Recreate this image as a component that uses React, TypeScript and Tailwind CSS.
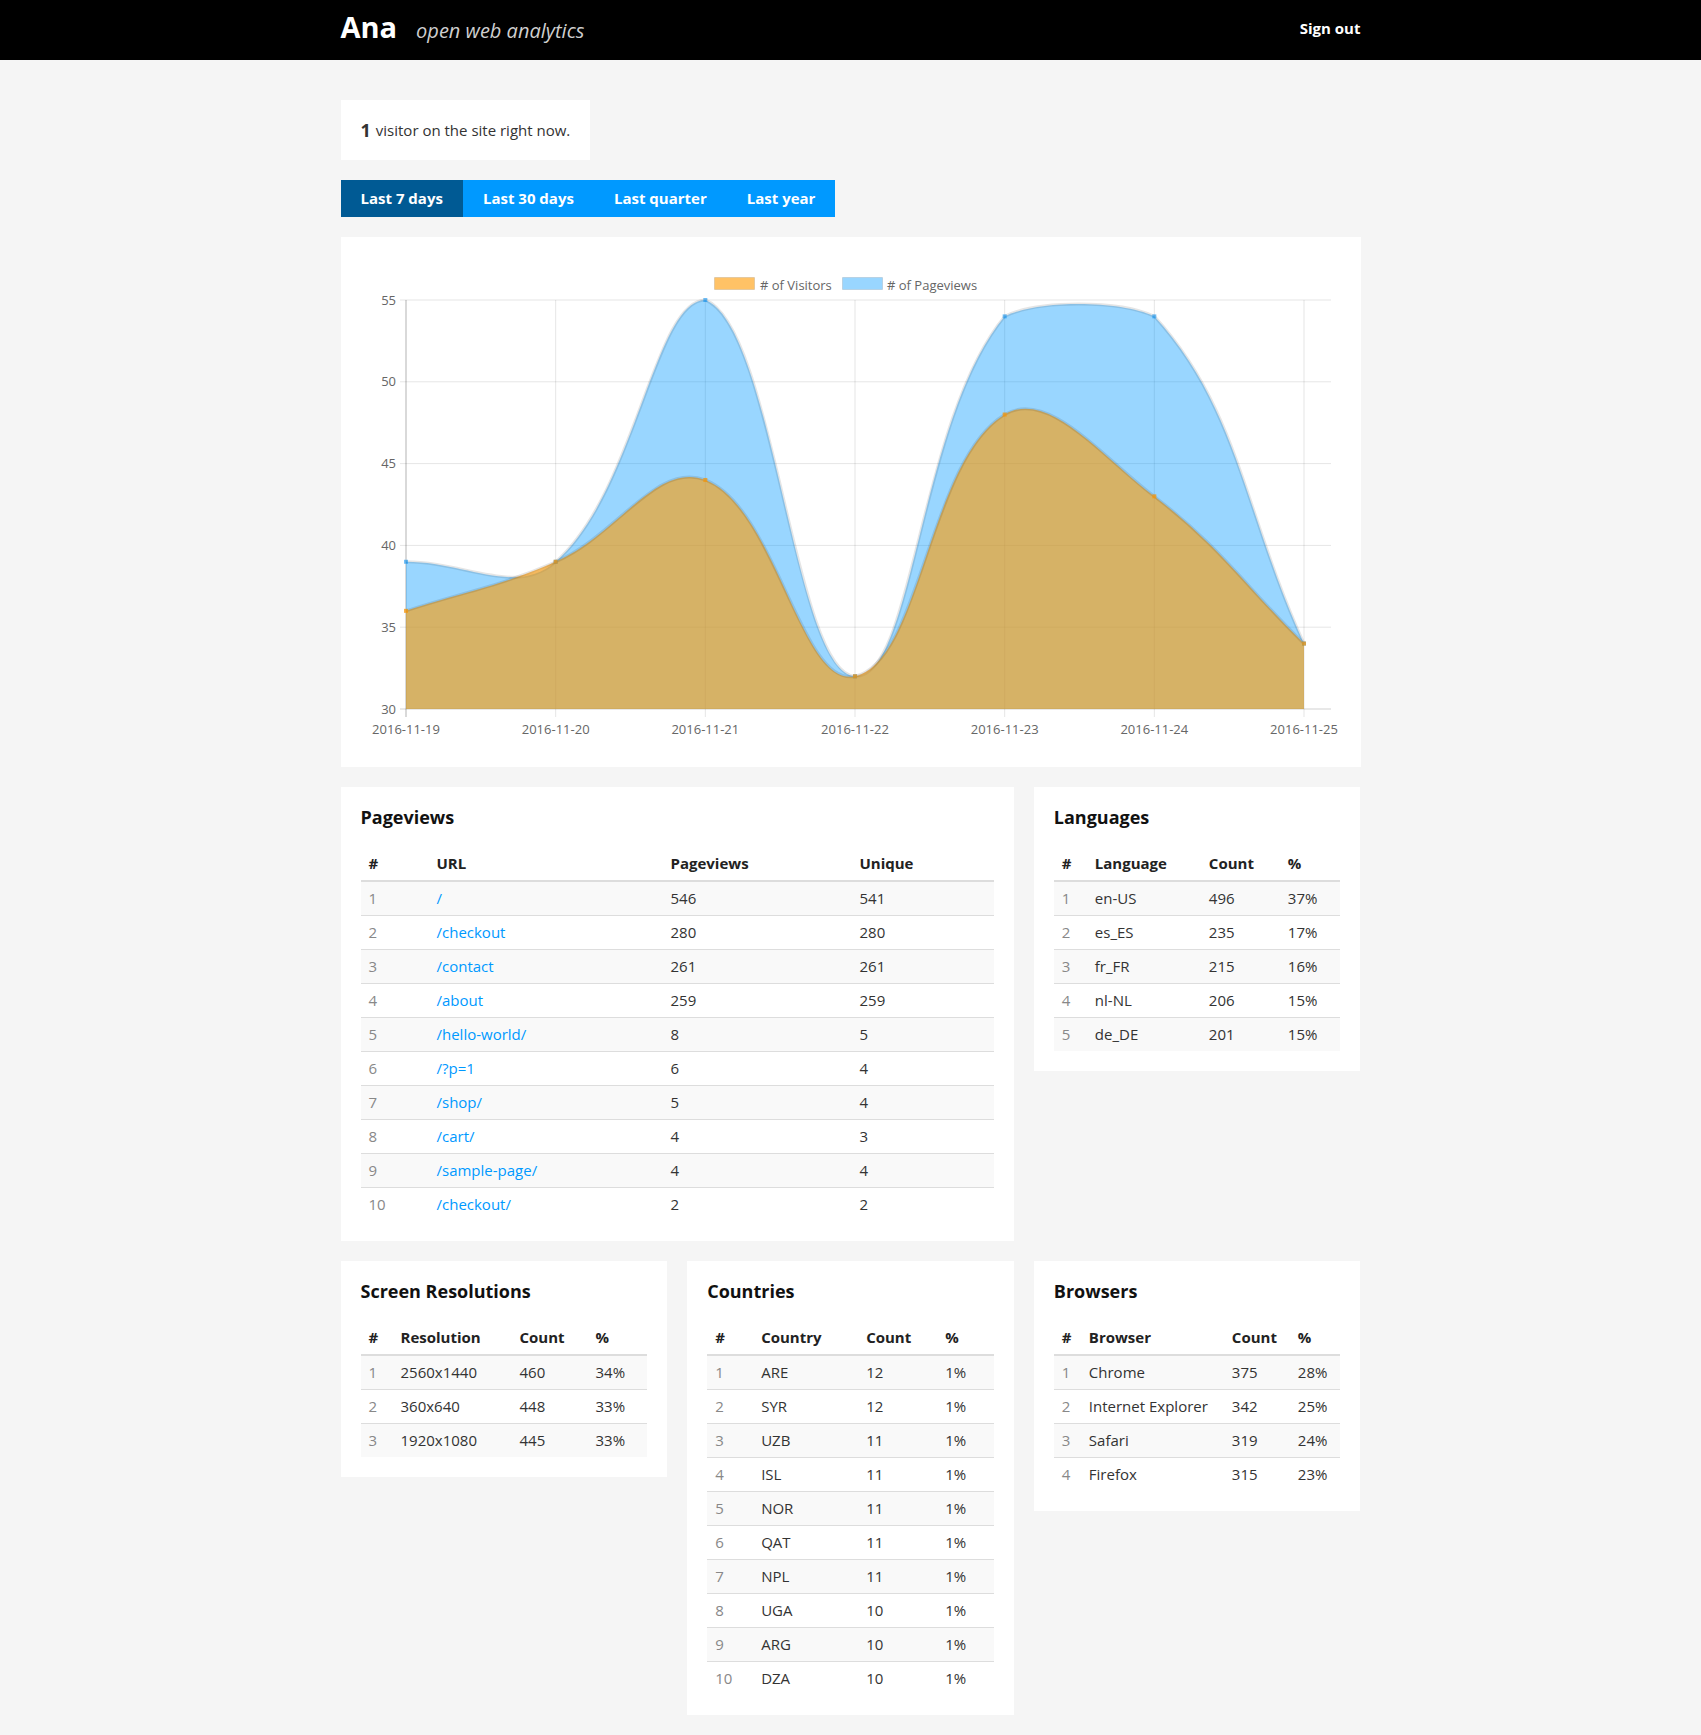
import React from "react";

type Row = (string | number)[];

const pageviews: Row[] = [
  [1, "/", 546, 541],
  [2, "/checkout", 280, 280],
  [3, "/contact", 261, 261],
  [4, "/about", 259, 259],
  [5, "/hello-world/", 8, 5],
  [6, "/?p=1", 6, 4],
  [7, "/shop/", 5, 4],
  [8, "/cart/", 4, 3],
  [9, "/sample-page/", 4, 4],
  [10, "/checkout/", 2, 2],
];

const languages: Row[] = [
  [1, "en-US", 496, "37%"],
  [2, "es_ES", 235, "17%"],
  [3, "fr_FR", 215, "16%"],
  [4, "nl-NL", 206, "15%"],
  [5, "de_DE", 201, "15%"],
];

const resolutions: Row[] = [
  [1, "2560x1440", 460, "34%"],
  [2, "360x640", 448, "33%"],
  [3, "1920x1080", 445, "33%"],
];

const countries: Row[] = [
  [1, "ARE", 12, "1%"],
  [2, "SYR", 12, "1%"],
  [3, "UZB", 11, "1%"],
  [4, "ISL", 11, "1%"],
  [5, "NOR", 11, "1%"],
  [6, "QAT", 11, "1%"],
  [7, "NPL", 11, "1%"],
  [8, "UGA", 10, "1%"],
  [9, "ARG", 10, "1%"],
  [10, "DZA", 10, "1%"],
];

const browsers: Row[] = [
  [1, "Chrome", 375, "28%"],
  [2, "Internet Explorer", 342, "25%"],
  [3, "Safari", 319, "24%"],
  [4, "Firefox", 315, "23%"],
];

const labels = [
  "2016-11-19",
  "2016-11-20",
  "2016-11-21",
  "2016-11-22",
  "2016-11-23",
  "2016-11-24",
  "2016-11-25",
];
const visitors = [36, 39, 44, 32, 48, 43, 34];
const views = [39, 39, 55, 32, 54, 54, 34];

const X0 = 65;
const X1 = 963;
const YT = 63;
const YB = 472;
const xs = (i: number) => X0 + (i * (X1 - X0)) / 6;
const yv = (v: number) => YT + (55 - v) * ((YB - YT) / 25);

function buildPath(vals: number[]) {
  const pts = vals.map((v, i) => ({ x: xs(i), y: yv(v) }));
  const t = 0.4;
  const clampY = (y: number) => Math.max(YT, Math.min(YB, y));
  const clampX = (x: number) => Math.max(X0, Math.min(X1, x));
  const cps = pts.map((p, i) => {
    const p0 = pts[i - 1] || p;
    const p2 = pts[i + 1] || p;
    const d01 = Math.hypot(p.x - p0.x, p.y - p0.y);
    const d12 = Math.hypot(p2.x - p.x, p2.y - p.y);
    let s01 = d01 / (d01 + d12);
    let s12 = d12 / (d01 + d12);
    if (isNaN(s01)) s01 = 0;
    if (isNaN(s12)) s12 = 0;
    const fa = t * s01;
    const fb = t * s12;
    return {
      prev: { x: clampX(p.x - fa * (p2.x - p0.x)), y: clampY(p.y - fa * (p2.y - p0.y)) },
      next: { x: clampX(p.x + fb * (p2.x - p0.x)), y: clampY(p.y + fb * (p2.y - p0.y)) },
    };
  });
  let d = `M${pts[0].x},${pts[0].y}`;
  for (let i = 1; i < pts.length; i++) {
    d += ` C${cps[i - 1].next.x},${cps[i - 1].next.y} ${cps[i].prev.x},${cps[i].prev.y} ${pts[i].x},${pts[i].y}`;
  }
  const fill = `${d} L${pts[pts.length - 1].x},${YB} L${pts[0].x},${YB} Z`;
  return { line: d, fill, pts };
}

function Chart() {
  const blue = buildPath(views);
  const orange = buildPath(visitors);
  const ticks = [55, 50, 45, 40, 35, 30];
  return (
    <svg width="1020" height="530" viewBox="0 0 1020 530" className="block">
      {ticks.map((v) => (
        <g key={v}>
          <line
            x1={59}
            x2={990}
            y1={yv(v)}
            y2={yv(v)}
            stroke={v === 30 ? "rgba(0,0,0,0.18)" : "rgba(0,0,0,0.1)"}
            strokeWidth={1}
          />
          <text
            x={55}
            y={yv(v) + 4.5}
            textAnchor="end"
            fontFamily="'Open Sans', sans-serif"
            fontSize={13}
            fill="#666"
          >
            {v}
          </text>
        </g>
      ))}
      {labels.map((l, i) => (
        <g key={l}>
          <line
            x1={xs(i)}
            x2={xs(i)}
            y1={YT}
            y2={YB + 8}
            stroke={i === 0 ? "rgba(0,0,0,0.3)" : "rgba(0,0,0,0.1)"}
            strokeWidth={1}
          />
          <text
            x={xs(i)}
            y={497}
            textAnchor="middle"
            fontFamily="'Open Sans', sans-serif"
            fontSize={13}
            fill="#666"
          >
            {l}
          </text>
        </g>
      ))}
      <path d={blue.fill} fill="rgba(0,153,255,0.4)" />
      <path d={blue.line} fill="none" stroke="rgba(0,0,0,0.1)" strokeWidth={3} />
      <path d={orange.fill} fill="rgba(255,153,0,0.6)" />
      <path d={orange.line} fill="none" stroke="rgba(0,0,0,0.1)" strokeWidth={3} />
      {blue.pts.map((p, i) => (
        <rect key={`b${i}`} x={p.x - 2} y={p.y - 2} width={4} height={4} fill="rgba(0,140,240,0.55)" />
      ))}
      {orange.pts.map((p, i) => (
        <rect key={`o${i}`} x={p.x - 2} y={p.y - 2} width={4} height={4} fill="rgba(245,150,10,0.75)" />
      ))}
      <rect x={373.5} y={40.5} width={40} height={12} fill="rgba(255,153,0,0.6)" stroke="rgba(0,0,0,0.1)" />
      <text x={419} y={53} fontFamily="'Open Sans', sans-serif" fontSize={13} fill="#666">
        # of Visitors
      </text>
      <rect x={501.5} y={40.5} width={40} height={12} fill="rgba(0,153,255,0.4)" stroke="rgba(0,0,0,0.1)" />
      <text x={546} y={53} fontFamily="'Open Sans', sans-serif" fontSize={13} fill="#666">
        # of Pageviews
      </text>
    </svg>
  );
}

function DataTable({
  title,
  headers,
  widths,
  rows,
  linkCol,
}: {
  title: string;
  headers: string[];
  widths: string[];
  rows: Row[];
  linkCol?: boolean;
}) {
  return (
    <div className="bg-white px-5 pt-5 pb-5">
      <h2 className="text-[18px] leading-[20px] h-[20px] font-bold text-[#111]">{title}</h2>
      <table className="mt-5 w-full table-fixed border-separate border-spacing-0 text-[15px]">
        <thead>
          <tr>
            {headers.map((h, i) => (
              <th
                key={h}
                className={`${widths[i] || ""} text-left font-bold text-[#222] px-2 py-[6px] leading-[21px] border-b-2 border-[#ddd]`}
              >
                {h}
              </th>
            ))}
          </tr>
        </thead>
        <tbody>
          {rows.map((r, ri) => (
            <tr key={ri} className={ri % 2 === 0 ? "bg-[#f9f9f9]" : "bg-white"}>
              {r.map((c, ci) => (
                <td
                  key={ci}
                  className={`px-2 py-[6px] leading-[21px] whitespace-nowrap ${
                    ri > 0 ? "border-t border-[#ddd]" : ""
                  } ${ci === 0 ? "text-[#888]" : "text-[#333]"}`}
                >
                  {linkCol && ci === 1 ? <a className="text-[#0099ff]">{c}</a> : c}
                </td>
              ))}
            </tr>
          ))}
        </tbody>
      </table>
    </div>
  );
}

export default function App() {
  return (
    <div className="min-h-screen bg-[#f5f5f5] font-['Open_Sans',sans-serif] text-[#333] pb-5">
      <header className="bg-black h-[60px]">
        <div className="w-[1020px] mx-auto h-full flex items-center justify-between">
          <div className="flex items-baseline mb-[8px]">
            <span className="text-[29px] leading-none font-bold text-white">Ana</span>
            <span className="ml-[19px] text-[20px] leading-none italic text-[#cfcfcf]">open web analytics</span>
          </div>
          <span className="text-[15px] leading-5 font-bold text-white mb-[5px]">Sign out</span>
        </div>
      </header>
      <main className="w-[1020px] mx-auto">
        <div className="mt-10 inline-flex items-center h-[60px] bg-white px-5 text-[15px] leading-5 text-[#333]">
          <span className="text-[18px] font-bold mr-[5px]">1</span>
          <span>visitor on the site right now.</span>
        </div>
        <div className="mt-5 flex">
          <span className="h-[37px] px-5 flex items-center text-[15px] font-bold text-white bg-[#005a94]">Last 7 days</span>
          <span className="h-[37px] px-5 flex items-center text-[15px] font-bold text-white bg-[#0099ff]">Last 30 days</span>
          <span className="h-[37px] px-5 flex items-center text-[15px] font-bold text-white bg-[#0099ff]">Last quarter</span>
          <span className="h-[37px] px-5 flex items-center text-[15px] font-bold text-white bg-[#0099ff]">Last year</span>
        </div>
        <div className="mt-5 bg-white h-[530px]">
          <Chart />
        </div>
        <div className="mt-5 grid grid-cols-3 gap-5 items-start">
          <div className="col-span-2">
            <DataTable
              title="Pageviews"
              headers={["#", "URL", "Pageviews", "Unique"]}
              widths={["w-[68px]", "w-[234px]", "w-[189px]"]}
              rows={pageviews}
              linkCol
            />
          </div>
          <DataTable
            title="Languages"
            headers={["#", "Language", "Count", "%"]}
            widths={["w-[33px]", "w-[114px]", "w-[79px]"]}
            rows={languages}
          />
        </div>
        <div className="mt-5 grid grid-cols-3 gap-5 items-start">
          <DataTable
            title="Screen Resolutions"
            headers={["#", "Resolution", "Count", "%"]}
            widths={["w-[32px]", "w-[119px]", "w-[76px]"]}
            rows={resolutions}
          />
          <DataTable
            title="Countries"
            headers={["#", "Country", "Count", "%"]}
            widths={["w-[46px]", "w-[105px]", "w-[79px]"]}
            rows={countries}
          />
          <DataTable
            title="Browsers"
            headers={["#", "Browser", "Count", "%"]}
            widths={["w-[27px]", "w-[143px]", "w-[66px]"]}
            rows={browsers}
          />
        </div>
      </main>
    </div>
  );
}
